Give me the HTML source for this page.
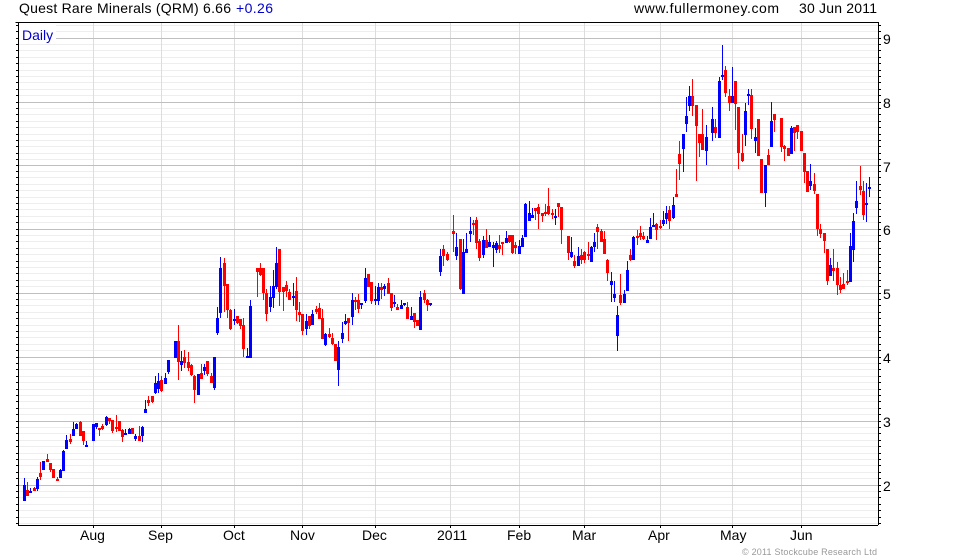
<!DOCTYPE html>
<html><head><meta charset="utf-8"><title>Quest Rare Minerals (QRM)</title>
<style>html,body{margin:0;padding:0;background:#fff;width:960px;height:560px;overflow:hidden}svg{display:block}text{font-family:"Liberation Sans",sans-serif;font-size:14px;fill:#000}</style></head>
<body>
<svg width="960" height="560" viewBox="0 0 960 560" xmlns="http://www.w3.org/2000/svg">
<g shape-rendering="crispEdges" fill="none" transform="translate(0 .5)">
<path stroke="#eeeeee" d="M18 25H878M18 31H878M18 44H878M18 50H878M18 57H878M18 63H878M18 70H878M18 76H878M18 82H878M18 89H878M18 95H878M18 108H878M18 114H878M18 121H878M18 127H878M18 134H878M18 140H878M18 146H878M18 153H878M18 159H878M18 171H878M18 177H878M18 184H878M18 190H878M18 197H878M18 203H878M18 209H878M18 216H878M18 222H878M18 235H878M18 241H878M18 248H878M18 254H878M18 261H878M18 267H878M18 273H878M18 280H878M18 286H878M18 299H878M18 305H878M18 312H878M18 318H878M18 325H878M18 331H878M18 337H878M18 344H878M18 350H878M18 363H878M18 369H878M18 376H878M18 382H878M18 389H878M18 395H878M18 401H878M18 408H878M18 414H878M18 427H878M18 433H878M18 440H878M18 446H878M18 453H878M18 459H878M18 465H878M18 472H878M18 478H878M18 491H878M18 497H878M18 504H878M18 510H878M18 517H878M18 523H878"/>
<path stroke="#dddddd" transform="translate(.5 -.5)" d="M93 22V525M161 22V525M234 22V525M302 22V525M375 22V525M450 22V525M519 22V525M584 22V525M660 22V525M732 22V525M801 22V525"/>
<path stroke="#bfbfbf" d="M18 38H878M18 102H878M18 165H878M18 229H878M18 293H878M18 357H878M18 421H878M18 485H878"/>
</g>
<rect x="19" y="24" width="37" height="19" fill="#fff"/>
<g shape-rendering="crispEdges" fill="none" transform="translate(.5 0)">
<path stroke="#ff0000" stroke-width="1" d="M27 482V496M34 487V491M40 462V480M47 454V462M50 463V472M57 477V481M70 434V444M80 421V436M83 431V445M99 428V436M102 424V430M109 418V424M112 420V433M116 415V432M122 429V442M139 426V441M148 396V406M152 396V403M161 376V392M178 325V380M184 350V368M188 352V371M191 364V376M194 375V403M201 364V379M207 361V376M211 373V383M224 258V312M227 284V318M230 309V330M237 316V324M240 319V329M243 318V357M257 268V297M260 263V276M263 268V300M266 289V321M279 249V306M283 287V311M286 281V297M289 289V300M296 277V321M299 302V322M302 314V335M309 316V329M316 306V314M319 303V319M322 309V339M329 328V338M332 333V345M348 318V341M355 297V310M358 294V313M371 282V304M381 283V299M388 278V294M391 293V311M397 304V310M407 302V319M414 313V328M424 290V303M427 299V311M443 245V266M447 252V261M453 215V252M460 239V290M473 220V235M476 217V249M479 239V261M486 229V248M499 235V253M502 242V255M509 235V243M512 235V254M515 242V254M535 208V220M538 204V229M542 213V222M545 204V216M548 188V215M552 209V219M558 203V217M561 207V244M568 236V260M574 255V268M581 249V264M584 251V263M588 242V260M597 224V249M601 229V242M604 231V254M607 259V281M620 274V305M630 249V261M637 230V245M640 226V240M643 232V240M656 223V240M660 220V229M669 206V229M676 169V197M679 141V180M692 79V116M696 105V181M699 134V157M702 109V150M715 119V138M725 66V97M729 89V111M735 81V130M738 107V169M742 134V162M751 89V139M768 149V165M774 114V132M781 118V152M784 145V161M794 127V151M797 125V139M804 153V183M814 173V194M817 194V236M820 224V238M824 233V253M827 249V285M833 249V281M837 262V295M840 277V293M843 273V289M847 270V285M860 166V195M863 181V220"/>
<path stroke="#ff0000" stroke-width="3" d="M27 490V496M34 488V491M40 473V477M47 459V462M50 463V470M53 469V478M57 479V481M70 439V442M80 422V436M83 431V441M99 428V430M102 426V429M109 418V421M112 420V431M116 427V429M119 421V431M122 430V437M132 428V434M139 436V441M148 400V403M152 396V402M161 380V391M178 341V362M184 357V363M188 362V368M191 365V375M194 376V390M201 373V379M207 361V374M211 376V383M224 263V286M227 284V310M230 310V329M237 316V323M240 319V326M243 325V349M257 268V272M260 268V275M263 268V293M266 293V314M279 249V292M283 287V292M286 285V291M289 292V300M296 291V310M299 312V315M302 314V331M309 316V326M316 309V312M319 308V319M322 318V339M329 334V337M332 338V344M335 344V361M348 318V323M355 300V302M358 300V309M368 274V287M371 282V301M381 287V290M388 283V294M391 293V308M397 307V310M407 307V319M414 313V322M417 320V326M424 293V300M427 300V305M443 249V256M447 254V260M453 231V234M460 239V289M473 223V225M476 220V243M479 241V258M486 240V248M499 245V249M502 242V244M509 235V242M512 235V253M515 245V248M535 208V211M538 207V214M542 213V216M545 212V214M548 206V214M552 213V215M558 203V207M561 207V230M568 236V253M574 261V266M581 255V260M584 252V260M588 254V256M597 227V232M601 231V242M604 239V254M607 260V273M620 295V303M630 255V260M637 236V238M640 233V237M643 236V239M656 224V230M660 226V228M669 210V221M676 194V197M679 154V164M692 96V106M696 105V126M699 134V143M702 134V150M715 127V133M725 70V93M729 96V103M735 81V104M738 107V153M742 153V161M751 95V129M758 119V156M761 159V193M768 155V165M774 114V120M781 118V147M784 146V149M788 148V156M794 127V133M797 125V132M801 131V151M804 153V172M807 171V192M814 184V191M817 194V229M820 229V234M824 233V241M827 249V281M833 268V271M837 268V285M840 285V290M843 284V289M847 281V283M860 186V190M863 191V215"/>
<path stroke="#0000ff" stroke-width="1" d="M24 478V501M30 488V493M37 477V491M60 469V478M63 450V471M66 435V449M73 422V436M76 423V429M86 441V447M96 423V429M106 416V426M125 429V435M129 428V434M135 434V441M142 426V442M145 400V413M155 376V394M158 373V393M165 373V384M168 360V374M181 351V371M204 364V375M214 357V390M217 307V335M220 257V318M234 309V325M247 348V358M250 300V358M270 286V312M273 270V308M276 247V289M293 283V306M306 314V335M312 310V325M325 333V346M338 341V386M342 322V343M345 314V325M352 293V325M361 303V309M365 268V303M375 286V305M378 283V305M384 284V296M394 295V307M401 300V309M404 303V306M411 307V320M420 291V330M430 303V306M440 249V276M456 233V260M463 239V294M466 233V253M470 217V242M483 236V258M489 235V247M493 242V267M496 241V253M506 231V243M519 240V254M522 235V247M525 203V237M529 201V221M532 208V218M555 209V225M571 237V258M578 247V266M591 246V262M594 233V252M611 272V302M614 281V302M617 306V351M624 290V303M627 261V291M633 236V260M647 236V243M650 218V239M653 213V227M663 211V226M666 206V224M673 197V219M683 134V172M686 97V132M689 86V111M706 125V165M712 107V141M719 77V138M722 45V80M732 67V103M745 103V146M748 89V105M755 128V153M765 165V207M771 102V147M791 126V154M810 164V190M830 258V276M850 233V282M853 213V262M856 181V214M866 183V222M869 177V197"/>
<path stroke="#0000ff" stroke-width="3" d="M24 485V501M30 491V493M37 479V489M43 461V470M60 470V478M63 451V471M66 440V449M73 429V436M76 424V429M86 445V447M93 424V441M96 423V427M106 417V425M125 433V435M129 429V434M135 436V439M142 427V436M145 409V413M155 383V393M158 381V389M165 378V384M168 360V372M175 341V358M181 361V365M198 374V395M204 367V371M214 357V388M217 318V333M220 268V313M234 319V321M247 356V358M250 306V358M270 297V307M273 286V298M276 263V287M293 296V298M306 321V329M312 314V325M325 334V345M338 347V370M342 333V339M345 321V324M352 300V317M361 303V305M365 278V301M375 299V301M378 287V301M384 286V289M394 302V304M401 305V309M404 303V305M411 316V320M420 297V330M430 303V305M440 256V272M456 247V256M463 252V294M466 249V253M470 231V234M483 240V255M489 242V247M493 245V248M496 243V250M506 238V243M519 246V254M522 238V247M525 204V237M529 213V221M532 215V218M555 216V218M571 252V257M578 256V266M591 247V262M594 242V247M611 281V285M614 294V298M617 315V336M624 294V303M627 270V291M633 237V260M647 240V243M650 227V239M653 225V227M663 220V224M666 213V219M673 205V218M683 134V149M686 116V124M689 96V106M706 137V151M712 119V133M719 81V138M722 75V77M732 96V103M745 111V135M748 94V96M755 137V141M765 165V193M771 121V147M791 128V154M810 181V186M830 265V276M850 246V282M853 221V250M856 201V208M866 203V205M869 187V189"/>
</g>
<g shape-rendering="crispEdges" fill="none" stroke="#000" transform="translate(0 .5)">
<path d="M15.5 22H878M18 525H878"/>
<path transform="translate(.5 -.5)" d="M18 22V525M878 22V525"/>
<path d="M16 25H18M16 31H18M16 38H18M16 44H18M16 50H18M16 57H18M16 63H18M16 70H18M16 76H18M16 82H18M16 89H18M16 95H18M16 102H18M16 108H18M16 114H18M16 121H18M16 127H18M16 134H18M16 140H18M16 146H18M16 153H18M16 159H18M16 165H18M16 171H18M16 177H18M16 184H18M16 190H18M16 197H18M16 203H18M16 209H18M16 216H18M16 222H18M16 229H18M16 235H18M16 241H18M16 248H18M16 254H18M16 261H18M16 267H18M16 273H18M16 280H18M16 286H18M16 293H18M16 299H18M16 305H18M16 312H18M16 318H18M16 325H18M16 331H18M16 337H18M16 344H18M16 350H18M16 357H18M16 363H18M16 369H18M16 376H18M16 382H18M16 389H18M16 395H18M16 401H18M16 408H18M16 414H18M16 421H18M16 427H18M16 433H18M16 440H18M16 446H18M16 453H18M16 459H18M16 465H18M16 472H18M16 478H18M16 485H18M16 491H18M16 497H18M16 504H18M16 510H18M16 517H18M16 523H18"/>
<path d="M879 25H881M879 31H881M879 38H881M879 44H881M879 50H881M879 57H881M879 63H881M879 70H881M879 76H881M879 82H881M879 89H881M879 95H881M879 102H881M879 108H881M879 114H881M879 121H881M879 127H881M879 134H881M879 140H881M879 146H881M879 153H881M879 159H881M879 165H881M879 171H881M879 177H881M879 184H881M879 190H881M879 197H881M879 203H881M879 209H881M879 216H881M879 222H881M879 229H881M879 235H881M879 241H881M879 248H881M879 254H881M879 261H881M879 267H881M879 273H881M879 280H881M879 286H881M879 293H881M879 299H881M879 305H881M879 312H881M879 318H881M879 325H881M879 331H881M879 337H881M879 344H881M879 350H881M879 357H881M879 363H881M879 369H881M879 376H881M879 382H881M879 389H881M879 395H881M879 401H881M879 408H881M879 414H881M879 421H881M879 427H881M879 433H881M879 440H881M879 446H881M879 453H881M879 459H881M879 465H881M879 472H881M879 478H881M879 485H881M879 491H881M879 497H881M879 504H881M879 510H881M879 517H881M879 523H881"/>
<path transform="translate(.5 -.5)" d="M93 525V528M161 525V528M234 525V528M302 525V528M375 525V528M450 525V528M519 525V528M584 525V528M660 525V528M732 525V528M801 525V528"/>
</g>
<text x="19" y="13" textLength="212" lengthAdjust="spacing">Quest Rare Minerals (QRM) 6.66</text>
<text x="236" y="13" textLength="37" lengthAdjust="spacing" style="fill:#0000cc">+0.26</text>
<text x="634" y="13" textLength="145" lengthAdjust="spacing">www.fullermoney.com</text>
<text x="799" y="13" textLength="78" lengthAdjust="spacing">30 Jun 2011</text>
<text x="22" y="40" style="fill:#0000cc">Daily</text>
<text x="883" y="44">9</text><text x="883" y="108">8</text><text x="883" y="172">7</text><text x="883" y="235">6</text><text x="883" y="299">5</text><text x="883" y="363">4</text><text x="883" y="427">3</text><text x="883" y="491">2</text>
<text x="80" y="540">Aug</text><text x="148" y="540">Sep</text><text x="223" y="540">Oct</text><text x="290" y="540">Nov</text><text x="362" y="540">Dec</text><text x="437" y="540">2011</text><text x="507" y="540">Feb</text><text x="572" y="540">Mar</text><text x="648" y="540">Apr</text><text x="720" y="540">May</text><text x="790" y="540">Jun</text>
<text x="742" y="555" textLength="135" lengthAdjust="spacing" style="font-size:9px;fill:#999">© 2011 Stockcube Research Ltd</text>
</svg>
</body></html>
